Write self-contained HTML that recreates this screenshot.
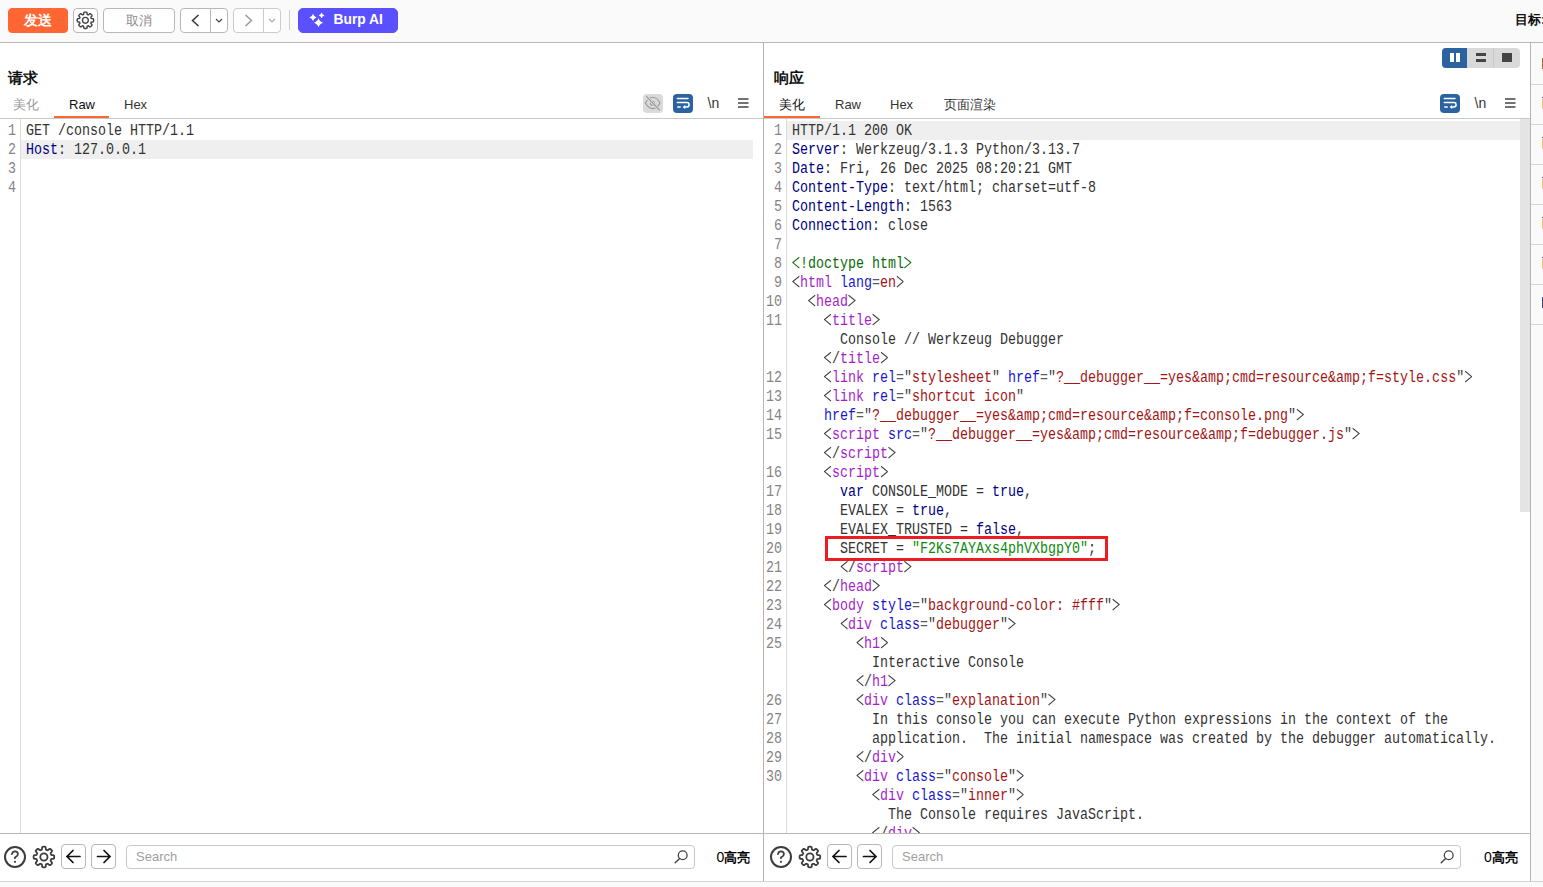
<!DOCTYPE html>
<html><head><meta charset="utf-8"><style>
*{box-sizing:border-box}
html,body{margin:0;padding:0}
body{width:1543px;height:887px;overflow:hidden;position:relative;background:#fff;font-family:"Liberation Sans",sans-serif;color:#111}
.a{position:absolute}
#tb{position:absolute;left:0;top:0;width:1543px;height:42px;background:#fafafa;border-bottom:1px solid #bcb6b6;height:43px}
.btn{position:absolute;top:8px;height:25px;border:1px solid #bdb6b6;border-radius:4px;background:#fff}
.cl{position:absolute;height:19px;line-height:19px;white-space:pre;font-family:"Liberation Mono",monospace;font-size:16px;transform:scaleX(0.8333);transform-origin:0 0;color:#333}
.ln{position:absolute;width:40px;text-align:right;height:19px;line-height:19px;font-family:"Liberation Mono",monospace;font-size:16px;color:#858585;transform:scaleX(0.8333);transform-origin:100% 0}
.t{color:#333}
.k{color:#000080}
.tg{color:#a51fc9}
.at{color:#1717cc}
.av{color:#a31515}
.eq{color:#5a5a5a}
.p{color:#404040}
.dt{color:#0b6b0b}
.str{color:#0d8a0d}
.title{position:absolute;top:69px;font-size:14.5px;font-weight:bold;color:#111}
.tab{position:absolute;top:96px;font-size:13px;line-height:18px;color:#222}
.tabu{position:absolute;top:116px;height:2px;background:#ff6633}
.hsep{position:absolute;height:1px;background:#c8c8c8}
.vsep{position:absolute;width:1px;background:#b9b3b3}
.srch{position:absolute;top:845px;height:24px;border:1px solid #c9c9c9;border-radius:4px;background:#fff}
.srch span{position:absolute;left:9px;top:3px;font-size:13px;line-height:16px;color:#a0a0a0}
.fbtn{position:absolute;top:844px;width:25px;height:25px;border:1px solid #bdb6b6;border-radius:4px;background:#fff}
.hl{position:absolute;font-size:13.5px;line-height:18px;top:847.5px;color:#000;white-space:nowrap}
.br{display:inline-block;width:9.6px;height:19px;vertical-align:top;color:#3a3a3a}
.br svg{display:block}
.dt.br{color:#0b6b0b}

</style></head><body>
<!-- toolbar -->
<div id="tb"></div>
<div class="btn" style="left:8px;width:60px;background:#ff6633;border-color:#ff6633"><span class="a" style="left:0;width:58px;top:3px;text-align:center;font-size:13.5px;line-height:17px;color:#fff;font-weight:600">发送</span></div>
<div class="btn" style="left:73px;width:25px"></div>
<svg class="a" style="left:73px;top:8px" width="25" height="25" viewBox="0 0 25 25"><path id="gearp" d="M20.60 12.30 L20.60 12.51 L20.59 12.73 L20.57 12.94 L20.55 13.16 L20.51 13.37 L20.45 13.57 L20.29 13.76 L19.93 13.90 L19.31 13.96 L18.74 14.00 L18.42 14.08 L18.26 14.20 L18.17 14.34 L18.10 14.49 L18.04 14.63 L17.98 14.78 L17.92 14.94 L17.89 15.10 L17.92 15.30 L18.08 15.58 L18.46 16.01 L18.86 16.49 L19.02 16.85 L18.99 17.09 L18.89 17.28 L18.77 17.46 L18.63 17.62 L18.49 17.79 L18.35 17.94 L18.20 18.10 L18.04 18.25 L17.89 18.39 L17.72 18.53 L17.56 18.67 L17.38 18.79 L17.19 18.89 L16.95 18.92 L16.59 18.76 L16.11 18.36 L15.68 17.98 L15.40 17.82 L15.20 17.79 L15.04 17.82 L14.88 17.88 L14.73 17.94 L14.59 18.00 L14.44 18.07 L14.30 18.16 L14.18 18.32 L14.10 18.64 L14.06 19.21 L14.00 19.83 L13.86 20.19 L13.67 20.35 L13.47 20.41 L13.26 20.45 L13.04 20.47 L12.83 20.49 L12.61 20.50 L12.40 20.50 L12.19 20.50 L11.97 20.49 L11.76 20.47 L11.54 20.45 L11.33 20.41 L11.13 20.35 L10.94 20.19 L10.80 19.83 L10.74 19.21 L10.70 18.64 L10.62 18.32 L10.50 18.16 L10.36 18.07 L10.21 18.00 L10.07 17.94 L9.92 17.88 L9.76 17.82 L9.60 17.79 L9.40 17.82 L9.12 17.98 L8.69 18.36 L8.21 18.76 L7.85 18.92 L7.61 18.89 L7.42 18.79 L7.24 18.67 L7.08 18.53 L6.91 18.39 L6.76 18.25 L6.60 18.10 L6.45 17.94 L6.31 17.79 L6.17 17.62 L6.03 17.46 L5.91 17.28 L5.81 17.09 L5.78 16.85 L5.94 16.49 L6.34 16.01 L6.72 15.58 L6.88 15.30 L6.91 15.10 L6.88 14.94 L6.82 14.78 L6.76 14.63 L6.70 14.49 L6.63 14.34 L6.54 14.20 L6.38 14.08 L6.06 14.00 L5.49 13.96 L4.87 13.90 L4.51 13.76 L4.35 13.57 L4.29 13.37 L4.25 13.16 L4.23 12.94 L4.21 12.73 L4.20 12.51 L4.20 12.30 L4.20 12.09 L4.21 11.87 L4.23 11.66 L4.25 11.44 L4.29 11.23 L4.35 11.03 L4.51 10.84 L4.87 10.70 L5.49 10.64 L6.06 10.60 L6.38 10.52 L6.54 10.40 L6.63 10.26 L6.70 10.11 L6.76 9.97 L6.82 9.82 L6.88 9.66 L6.91 9.50 L6.88 9.30 L6.72 9.02 L6.34 8.59 L5.94 8.11 L5.78 7.75 L5.81 7.51 L5.91 7.32 L6.03 7.14 L6.17 6.98 L6.31 6.81 L6.45 6.66 L6.60 6.50 L6.76 6.35 L6.91 6.21 L7.08 6.07 L7.24 5.93 L7.42 5.81 L7.61 5.71 L7.85 5.68 L8.21 5.84 L8.69 6.24 L9.12 6.62 L9.40 6.78 L9.60 6.81 L9.76 6.78 L9.92 6.72 L10.07 6.66 L10.21 6.60 L10.36 6.53 L10.50 6.44 L10.62 6.28 L10.70 5.96 L10.74 5.39 L10.80 4.77 L10.94 4.41 L11.13 4.25 L11.33 4.19 L11.54 4.15 L11.76 4.13 L11.97 4.11 L12.19 4.10 L12.40 4.10 L12.61 4.10 L12.83 4.11 L13.04 4.13 L13.26 4.15 L13.47 4.19 L13.67 4.25 L13.86 4.41 L14.00 4.77 L14.06 5.39 L14.10 5.96 L14.18 6.28 L14.30 6.44 L14.44 6.53 L14.59 6.60 L14.73 6.66 L14.88 6.72 L15.04 6.78 L15.20 6.81 L15.40 6.78 L15.68 6.62 L16.11 6.24 L16.59 5.84 L16.95 5.68 L17.19 5.71 L17.38 5.81 L17.56 5.93 L17.72 6.07 L17.89 6.21 L18.04 6.35 L18.20 6.50 L18.35 6.66 L18.49 6.81 L18.63 6.98 L18.77 7.14 L18.89 7.32 L18.99 7.51 L19.02 7.75 L18.86 8.11 L18.46 8.59 L18.08 9.02 L17.92 9.30 L17.89 9.50 L17.92 9.66 L17.98 9.82 L18.04 9.97 L18.10 10.11 L18.17 10.26 L18.26 10.40 L18.42 10.52 L18.74 10.60 L19.31 10.64 L19.93 10.70 L20.29 10.84 L20.45 11.03 L20.51 11.23 L20.55 11.44 L20.57 11.66 L20.59 11.87 L20.60 12.09Z" fill="none" stroke="#444" stroke-width="1.45" stroke-linejoin="round"/><circle cx="12.4" cy="12.3" r="2.9" fill="none" stroke="#444" stroke-width="1.35"/></svg>
<div class="btn" style="left:103px;width:72px"><span class="a" style="left:0;width:70px;top:3px;text-align:center;font-size:13px;line-height:17px;color:#8a8a8a">取消</span></div>
<div class="btn" style="left:180px;width:48px"></div>
<div class="a" style="left:210px;top:9px;width:1px;height:23px;background:#bdb6b6"></div>
<svg class="a" style="left:180px;top:8px" width="48" height="25"><path d="M18.5 7 L12.5 12.5 L18.5 18" fill="none" stroke="#333" stroke-width="1.5"/><path d="M36 11 L39 14 L42 11" fill="none" stroke="#444" stroke-width="1.2"/></svg>
<div class="btn" style="left:233px;width:48px;border-color:#cfcaca"></div>
<div class="a" style="left:263px;top:9px;width:1px;height:23px;background:#cfcaca"></div>
<svg class="a" style="left:233px;top:8px" width="48" height="25"><path d="M12.5 7 L18.5 12.5 L12.5 18" fill="none" stroke="#9a9a9a" stroke-width="1.5"/><path d="M36 11 L39 14 L42 11" fill="none" stroke="#aaa" stroke-width="1.2"/></svg>
<div class="a" style="left:289px;top:10px;width:1px;height:20px;background:#cfcfcf"></div>
<div class="btn" style="left:298px;width:100px;background:#5b50ff;border-color:#5b50ff;border-radius:5px"></div>
<svg class="a" style="left:298px;top:8px" width="30" height="25" viewBox="0 0 30 25">
<path fill="#fff" d="M20.5 10.05 Q21.512 13.638 25.1 14.65 Q21.512 15.662 20.5 19.25 Q19.488 15.662 15.9 14.65 Q19.488 13.638 20.5 10.05Z"/>
<path fill="#fff" d="M15 5.7 Q15.814 8.586 18.7 9.4 Q15.814 10.214 15 13.100000000000001 Q14.186 10.214 11.3 9.4 Q14.186 8.586 15 5.7Z"/>
<path fill="#fff" d="M23.6 4.5 Q24.238000000000003 6.7620000000000005 26.5 7.4 Q24.238000000000003 8.038 23.6 10.3 Q22.962 8.038 20.700000000000003 7.4 Q22.962 6.7620000000000005 23.6 4.5Z"/>
</svg>
<span class="a" style="left:333.5px;top:11px;font-size:13.8px;line-height:18px;font-weight:bold;color:#fff">Burp AI</span>
<span class="a" style="left:1515px;top:10.5px;font-size:13px;line-height:18px;font-weight:bold;color:#111;white-space:nowrap">目标: </span>

<!-- frame -->
<div class="vsep" style="left:763px;top:43px;height:839px"></div>
<div class="a" style="left:1531px;top:43px;width:12px;height:844px;background:#fafafa"></div>
<div class="vsep" style="left:1530px;top:43px;height:839px"></div>
<div class="a" style="left:1541.5px;top:58px;width:1.5px;height:11px;background:#a86a3a"></div>
<div class="a" style="left:1541.5px;top:97px;width:1.5px;height:1px;background:#5a4a8a"></div><div class="a" style="left:1541.5px;top:99px;width:1.5px;height:10px;background:#eec68a"></div>
<div class="a" style="left:1541.5px;top:137px;width:1.5px;height:1px;background:#5a4a8a"></div><div class="a" style="left:1541.5px;top:139px;width:1.5px;height:10px;background:#eec68a"></div>
<div class="a" style="left:1541.5px;top:177px;width:1.5px;height:1px;background:#5a4a8a"></div><div class="a" style="left:1541.5px;top:179px;width:1.5px;height:10px;background:#eec68a"></div>
<div class="a" style="left:1541.5px;top:217px;width:1.5px;height:1px;background:#5a4a8a"></div><div class="a" style="left:1541.5px;top:219px;width:1.5px;height:10px;background:#eec68a"></div>
<div class="a" style="left:1541.5px;top:257px;width:1.5px;height:1px;background:#5a4a8a"></div><div class="a" style="left:1541.5px;top:259px;width:1.5px;height:10px;background:#eec68a"></div>
<div class="a" style="left:1541.5px;top:297px;width:1.5px;height:11px;background:#4a4a7a"></div>
<div class="a" style="left:1531px;top:84px;width:12px;height:1px;background:#d4d4d4"></div>
<div class="a" style="left:1531px;top:124px;width:12px;height:1px;background:#d4d4d4"></div>
<div class="a" style="left:1531px;top:164px;width:12px;height:1px;background:#d4d4d4"></div>
<div class="a" style="left:1531px;top:204px;width:12px;height:1px;background:#d4d4d4"></div>
<div class="a" style="left:1531px;top:244px;width:12px;height:1px;background:#d4d4d4"></div>
<div class="a" style="left:1531px;top:284px;width:12px;height:1px;background:#d4d4d4"></div>
<div class="a" style="left:1531px;top:324px;width:12px;height:1px;background:#d4d4d4"></div>

<!-- request -->
<span class="title" style="left:8px">请求</span>
<span class="tab" style="left:13px;color:#9a9a9a">美化</span>
<span class="tab" style="left:69px;color:#111">Raw</span>
<span class="tab" style="left:124px;color:#333">Hex</span>
<div class="tabu" style="left:54px;width:55px"></div>
<div class="hsep" style="left:0;top:118px;width:763px"></div>
<div class="a" style="left:643px;top:94px;width:20px;height:19px;background:#dadada;border-radius:4px"></div>
<svg class="a" style="left:643px;top:94px" width="20" height="19"><path d="M2.4 9 C4.5 5.5 6.5 3.2 9.5 3.2 C13 3.2 15.5 6 17 9 C15.5 12 13 14.6 9.5 14.6 C6.5 14.6 4.5 12.5 2.4 9Z" fill="none" stroke="#9a9a9a" stroke-width="1.15"/><circle cx="9.5" cy="9.3" r="2" fill="none" stroke="#9a9a9a" stroke-width="1.1"/><path d="M3.2 2.2 L16.8 16.4" stroke="#dadada" stroke-width="2.8"/><path d="M3.2 2.2 L16.8 16.4" stroke="#999" stroke-width="1.15"/></svg>
<div class="a" style="left:673px;top:94px;width:20px;height:19px;background:#2a63a0;border-radius:4px"></div><svg class="a" style="left:673px;top:94px" width="20" height="19"><path d="M4.3 4.5h10.7" stroke="#fff" stroke-width="1.5" stroke-linecap="round"/><path d="M4.3 8.6h9.6a2.2 2.2 0 0 1 0 4.4h-2.4" fill="none" stroke="#fff" stroke-width="1.5" stroke-linecap="round"/><path d="M9.6 13 L12.2 10.9 L12.2 15.1Z" fill="#fff"/><path d="M4.3 13h3.4" stroke="#fff" stroke-width="1.5"/></svg>
<span class="a" style="left:707.5px;top:94px;font-size:14px;line-height:18px;color:#333">\n</span>
<svg class="a" style="left:737px;top:97px" width="12" height="12"><path d="M1 2h10.5M1 6h10.5M1 10h10.5" stroke="#444" stroke-width="1.5"/></svg>
<div class="a" style="left:20px;top:119px;width:1px;height:714px;background:#dcdcdc"></div>
<div class="a" style="left:21px;top:140px;width:732px;height:19px;background:#efefef"></div>
<div class="ln" style="top:122px;left:-24px">1</div>
<div class="cl" style="top:122px;left:26px"><span class="t">GET /console HTTP/1.1</span></div>
<div class="ln" style="top:141px;left:-24px">2</div>
<div class="cl" style="top:141px;left:26px"><span class="k">Host</span><span class="t">: 127.0.0.1</span></div>
<div class="ln" style="top:160px;left:-24px">3</div>
<div class="cl" style="top:160px;left:26px"></div>
<div class="ln" style="top:179px;left:-24px">4</div>
<div class="cl" style="top:179px;left:26px"></div>

<!-- response -->
<span class="title" style="left:774px">响应</span>
<span class="tab" style="left:779px;color:#111">美化</span>
<span class="tab" style="left:835px;color:#333">Raw</span>
<span class="tab" style="left:890px;color:#333">Hex</span>
<span class="tab" style="left:944px;color:#333">页面渲染</span>
<div class="tabu" style="left:764px;width:56px"></div>
<div class="hsep" style="left:764px;top:118px;width:766px"></div>
<div class="a" style="left:1442px;top:48px;width:78px;height:20px;background:#d9d9d9;border-radius:4px"></div>
<div class="a" style="left:1442px;top:48px;width:25px;height:20px;background:#2a63a0;border-radius:4px 0 0 4px"></div>
<div class="a" style="left:1493px;top:48px;width:1px;height:20px;background:#c8c8c8"></div>
<div class="a" style="left:1450px;top:53px;width:4px;height:9px;background:#fff"></div>
<div class="a" style="left:1456px;top:53px;width:4px;height:9px;background:#fff"></div>
<div class="a" style="left:1476px;top:53px;width:10px;height:3px;background:#444"></div>
<div class="a" style="left:1476px;top:59px;width:10px;height:3px;background:#444"></div>
<div class="a" style="left:1502px;top:53px;width:10px;height:9px;background:#444"></div>
<div class="a" style="left:1440px;top:94px;width:20px;height:19px;background:#2a63a0;border-radius:4px"></div><svg class="a" style="left:1440px;top:94px" width="20" height="19"><path d="M4.3 4.5h10.7" stroke="#fff" stroke-width="1.5" stroke-linecap="round"/><path d="M4.3 8.6h9.6a2.2 2.2 0 0 1 0 4.4h-2.4" fill="none" stroke="#fff" stroke-width="1.5" stroke-linecap="round"/><path d="M9.6 13 L12.2 10.9 L12.2 15.1Z" fill="#fff"/><path d="M4.3 13h3.4" stroke="#fff" stroke-width="1.5"/></svg>
<span class="a" style="left:1474.5px;top:94px;font-size:14px;line-height:18px;color:#333">\n</span>
<svg class="a" style="left:1504px;top:97px" width="12" height="12"><path d="M1 2h10.5M1 6h10.5M1 10h10.5" stroke="#444" stroke-width="1.5"/></svg>
<div class="a" style="left:786px;top:119px;width:1px;height:714px;background:#dcdcdc"></div>
<div class="a" style="left:787px;top:121px;width:733px;height:19px;background:#efefef"></div>
<div class="a" style="left:1520px;top:119px;width:10px;height:393px;background:#e4e4e4"></div>
<div class="ln" style="top:122px;left:742px">1</div>
<div class="cl" style="top:122px;left:792px"><span class="t">HTTP/1.1 200 OK</span></div>
<div class="ln" style="top:141px;left:742px">2</div>
<div class="cl" style="top:141px;left:792px"><span class="k">Server</span><span class="t">: Werkzeug/3.1.3 Python/3.13.7</span></div>
<div class="ln" style="top:160px;left:742px">3</div>
<div class="cl" style="top:160px;left:792px"><span class="k">Date</span><span class="t">: Fri, 26 Dec 2025 08:20:21 GMT</span></div>
<div class="ln" style="top:179px;left:742px">4</div>
<div class="cl" style="top:179px;left:792px"><span class="k">Content-Type</span><span class="t">: text/html; charset=utf-8</span></div>
<div class="ln" style="top:198px;left:742px">5</div>
<div class="cl" style="top:198px;left:792px"><span class="k">Content-Length</span><span class="t">: 1563</span></div>
<div class="ln" style="top:217px;left:742px">6</div>
<div class="cl" style="top:217px;left:792px"><span class="k">Connection</span><span class="t">: close</span></div>
<div class="ln" style="top:236px;left:742px">7</div>
<div class="cl" style="top:236px;left:792px"></div>
<div class="ln" style="top:255px;left:742px">8</div>
<div class="cl" style="top:255px;left:792px"><span class="dt br"><svg width="9.6" height="19"><path d="M8.8 2.2L1 7.6L8.8 13" fill="none" stroke="currentColor" stroke-width="1.15"/></svg></span><span class="dt">!doctype html</span><span class="dt br"><svg width="9.6" height="19"><path d="M0.8 2.2L8.6 7.6L0.8 13" fill="none" stroke="currentColor" stroke-width="1.15"/></svg></span></div>
<div class="ln" style="top:274px;left:742px">9</div>
<div class="cl" style="top:274px;left:792px"><span class="br"><svg width="9.6" height="19"><path d="M8.8 2.2L1 7.6L8.8 13" fill="none" stroke="currentColor" stroke-width="1.15"/></svg></span><span class="tg">html</span><span class="t"> </span><span class="at">lang</span><span class="eq">=</span><span class="av">en</span><span class="br"><svg width="9.6" height="19"><path d="M0.8 2.2L8.6 7.6L0.8 13" fill="none" stroke="currentColor" stroke-width="1.15"/></svg></span></div>
<div class="ln" style="top:293px;left:742px">10</div>
<div class="cl" style="top:293px;left:792px">  <span class="br"><svg width="9.6" height="19"><path d="M8.8 2.2L1 7.6L8.8 13" fill="none" stroke="currentColor" stroke-width="1.15"/></svg></span><span class="tg">head</span><span class="br"><svg width="9.6" height="19"><path d="M0.8 2.2L8.6 7.6L0.8 13" fill="none" stroke="currentColor" stroke-width="1.15"/></svg></span></div>
<div class="ln" style="top:312px;left:742px">11</div>
<div class="cl" style="top:312px;left:792px">    <span class="br"><svg width="9.6" height="19"><path d="M8.8 2.2L1 7.6L8.8 13" fill="none" stroke="currentColor" stroke-width="1.15"/></svg></span><span class="tg">title</span><span class="br"><svg width="9.6" height="19"><path d="M0.8 2.2L8.6 7.6L0.8 13" fill="none" stroke="currentColor" stroke-width="1.15"/></svg></span></div>
<div class="cl" style="top:331px;left:792px">      <span class="t">Console // Werkzeug Debugger</span></div>
<div class="cl" style="top:350px;left:792px">    <span class="br"><svg width="9.6" height="19"><path d="M8.8 2.2L1 7.6L8.8 13" fill="none" stroke="currentColor" stroke-width="1.15"/></svg></span><span class="p">/</span><span class="tg">title</span><span class="br"><svg width="9.6" height="19"><path d="M0.8 2.2L8.6 7.6L0.8 13" fill="none" stroke="currentColor" stroke-width="1.15"/></svg></span></div>
<div class="ln" style="top:369px;left:742px">12</div>
<div class="cl" style="top:369px;left:792px">    <span class="br"><svg width="9.6" height="19"><path d="M8.8 2.2L1 7.6L8.8 13" fill="none" stroke="currentColor" stroke-width="1.15"/></svg></span><span class="tg">link</span><span class="t"> </span><span class="at">rel</span><span class="eq">=</span><span class="p">"</span><span class="av">stylesheet</span><span class="p">"</span><span class="t"> </span><span class="at">href</span><span class="eq">=</span><span class="p">"</span><span class="av">?__debugger__=yes&amp;amp;cmd=resource&amp;amp;f=style.css</span><span class="p">"</span><span class="br"><svg width="9.6" height="19"><path d="M0.8 2.2L8.6 7.6L0.8 13" fill="none" stroke="currentColor" stroke-width="1.15"/></svg></span></div>
<div class="ln" style="top:388px;left:742px">13</div>
<div class="cl" style="top:388px;left:792px">    <span class="br"><svg width="9.6" height="19"><path d="M8.8 2.2L1 7.6L8.8 13" fill="none" stroke="currentColor" stroke-width="1.15"/></svg></span><span class="tg">link</span><span class="t"> </span><span class="at">rel</span><span class="eq">=</span><span class="p">"</span><span class="av">shortcut icon</span><span class="p">"</span></div>
<div class="ln" style="top:407px;left:742px">14</div>
<div class="cl" style="top:407px;left:792px">    <span class="at">href</span><span class="eq">=</span><span class="p">"</span><span class="av">?__debugger__=yes&amp;amp;cmd=resource&amp;amp;f=console.png</span><span class="p">"</span><span class="br"><svg width="9.6" height="19"><path d="M0.8 2.2L8.6 7.6L0.8 13" fill="none" stroke="currentColor" stroke-width="1.15"/></svg></span></div>
<div class="ln" style="top:426px;left:742px">15</div>
<div class="cl" style="top:426px;left:792px">    <span class="br"><svg width="9.6" height="19"><path d="M8.8 2.2L1 7.6L8.8 13" fill="none" stroke="currentColor" stroke-width="1.15"/></svg></span><span class="tg">script</span><span class="t"> </span><span class="at">src</span><span class="eq">=</span><span class="p">"</span><span class="av">?__debugger__=yes&amp;amp;cmd=resource&amp;amp;f=debugger.js</span><span class="p">"</span><span class="br"><svg width="9.6" height="19"><path d="M0.8 2.2L8.6 7.6L0.8 13" fill="none" stroke="currentColor" stroke-width="1.15"/></svg></span></div>
<div class="cl" style="top:445px;left:792px">    <span class="br"><svg width="9.6" height="19"><path d="M8.8 2.2L1 7.6L8.8 13" fill="none" stroke="currentColor" stroke-width="1.15"/></svg></span><span class="p">/</span><span class="tg">script</span><span class="br"><svg width="9.6" height="19"><path d="M0.8 2.2L8.6 7.6L0.8 13" fill="none" stroke="currentColor" stroke-width="1.15"/></svg></span></div>
<div class="ln" style="top:464px;left:742px">16</div>
<div class="cl" style="top:464px;left:792px">    <span class="br"><svg width="9.6" height="19"><path d="M8.8 2.2L1 7.6L8.8 13" fill="none" stroke="currentColor" stroke-width="1.15"/></svg></span><span class="tg">script</span><span class="br"><svg width="9.6" height="19"><path d="M0.8 2.2L8.6 7.6L0.8 13" fill="none" stroke="currentColor" stroke-width="1.15"/></svg></span></div>
<div class="ln" style="top:483px;left:742px">17</div>
<div class="cl" style="top:483px;left:792px">      <span class="k">var</span><span class="t"> CONSOLE_MODE = </span><span class="k">true</span><span class="t">,</span></div>
<div class="ln" style="top:502px;left:742px">18</div>
<div class="cl" style="top:502px;left:792px">      <span class="t">EVALEX = </span><span class="k">true</span><span class="t">,</span></div>
<div class="ln" style="top:521px;left:742px">19</div>
<div class="cl" style="top:521px;left:792px">      <span class="t">EVALEX_TRUSTED = </span><span class="k">false</span><span class="t">,</span></div>
<div class="ln" style="top:540px;left:742px">20</div>
<div class="cl" style="top:540px;left:792px">      <span class="t">SECRET = </span><span class="str">"F2Ks7AYAxs4phVXbgpY0"</span><span class="t">;</span></div>
<div class="ln" style="top:559px;left:742px">21</div>
<div class="cl" style="top:559px;left:792px">      <span class="br"><svg width="9.6" height="19"><path d="M8.8 2.2L1 7.6L8.8 13" fill="none" stroke="currentColor" stroke-width="1.15"/></svg></span><span class="p">/</span><span class="tg">script</span><span class="br"><svg width="9.6" height="19"><path d="M0.8 2.2L8.6 7.6L0.8 13" fill="none" stroke="currentColor" stroke-width="1.15"/></svg></span></div>
<div class="ln" style="top:578px;left:742px">22</div>
<div class="cl" style="top:578px;left:792px">    <span class="br"><svg width="9.6" height="19"><path d="M8.8 2.2L1 7.6L8.8 13" fill="none" stroke="currentColor" stroke-width="1.15"/></svg></span><span class="p">/</span><span class="tg">head</span><span class="br"><svg width="9.6" height="19"><path d="M0.8 2.2L8.6 7.6L0.8 13" fill="none" stroke="currentColor" stroke-width="1.15"/></svg></span></div>
<div class="ln" style="top:597px;left:742px">23</div>
<div class="cl" style="top:597px;left:792px">    <span class="br"><svg width="9.6" height="19"><path d="M8.8 2.2L1 7.6L8.8 13" fill="none" stroke="currentColor" stroke-width="1.15"/></svg></span><span class="tg">body</span><span class="t"> </span><span class="at">style</span><span class="eq">=</span><span class="p">"</span><span class="av">background-color: #fff</span><span class="p">"</span><span class="br"><svg width="9.6" height="19"><path d="M0.8 2.2L8.6 7.6L0.8 13" fill="none" stroke="currentColor" stroke-width="1.15"/></svg></span></div>
<div class="ln" style="top:616px;left:742px">24</div>
<div class="cl" style="top:616px;left:792px">      <span class="br"><svg width="9.6" height="19"><path d="M8.8 2.2L1 7.6L8.8 13" fill="none" stroke="currentColor" stroke-width="1.15"/></svg></span><span class="tg">div</span><span class="t"> </span><span class="at">class</span><span class="eq">=</span><span class="p">"</span><span class="av">debugger</span><span class="p">"</span><span class="br"><svg width="9.6" height="19"><path d="M0.8 2.2L8.6 7.6L0.8 13" fill="none" stroke="currentColor" stroke-width="1.15"/></svg></span></div>
<div class="ln" style="top:635px;left:742px">25</div>
<div class="cl" style="top:635px;left:792px">        <span class="br"><svg width="9.6" height="19"><path d="M8.8 2.2L1 7.6L8.8 13" fill="none" stroke="currentColor" stroke-width="1.15"/></svg></span><span class="tg">h1</span><span class="br"><svg width="9.6" height="19"><path d="M0.8 2.2L8.6 7.6L0.8 13" fill="none" stroke="currentColor" stroke-width="1.15"/></svg></span></div>
<div class="cl" style="top:654px;left:792px">          <span class="t">Interactive Console</span></div>
<div class="cl" style="top:673px;left:792px">        <span class="br"><svg width="9.6" height="19"><path d="M8.8 2.2L1 7.6L8.8 13" fill="none" stroke="currentColor" stroke-width="1.15"/></svg></span><span class="p">/</span><span class="tg">h1</span><span class="br"><svg width="9.6" height="19"><path d="M0.8 2.2L8.6 7.6L0.8 13" fill="none" stroke="currentColor" stroke-width="1.15"/></svg></span></div>
<div class="ln" style="top:692px;left:742px">26</div>
<div class="cl" style="top:692px;left:792px">        <span class="br"><svg width="9.6" height="19"><path d="M8.8 2.2L1 7.6L8.8 13" fill="none" stroke="currentColor" stroke-width="1.15"/></svg></span><span class="tg">div</span><span class="t"> </span><span class="at">class</span><span class="eq">=</span><span class="p">"</span><span class="av">explanation</span><span class="p">"</span><span class="br"><svg width="9.6" height="19"><path d="M0.8 2.2L8.6 7.6L0.8 13" fill="none" stroke="currentColor" stroke-width="1.15"/></svg></span></div>
<div class="ln" style="top:711px;left:742px">27</div>
<div class="cl" style="top:711px;left:792px">          <span class="t">In this console you can execute Python expressions in the context of the</span></div>
<div class="ln" style="top:730px;left:742px">28</div>
<div class="cl" style="top:730px;left:792px">          <span class="t">application.  The initial namespace was created by the debugger automatically.</span></div>
<div class="ln" style="top:749px;left:742px">29</div>
<div class="cl" style="top:749px;left:792px">        <span class="br"><svg width="9.6" height="19"><path d="M8.8 2.2L1 7.6L8.8 13" fill="none" stroke="currentColor" stroke-width="1.15"/></svg></span><span class="p">/</span><span class="tg">div</span><span class="br"><svg width="9.6" height="19"><path d="M0.8 2.2L8.6 7.6L0.8 13" fill="none" stroke="currentColor" stroke-width="1.15"/></svg></span></div>
<div class="ln" style="top:768px;left:742px">30</div>
<div class="cl" style="top:768px;left:792px">        <span class="br"><svg width="9.6" height="19"><path d="M8.8 2.2L1 7.6L8.8 13" fill="none" stroke="currentColor" stroke-width="1.15"/></svg></span><span class="tg">div</span><span class="t"> </span><span class="at">class</span><span class="eq">=</span><span class="p">"</span><span class="av">console</span><span class="p">"</span><span class="br"><svg width="9.6" height="19"><path d="M0.8 2.2L8.6 7.6L0.8 13" fill="none" stroke="currentColor" stroke-width="1.15"/></svg></span></div>
<div class="cl" style="top:787px;left:792px">          <span class="br"><svg width="9.6" height="19"><path d="M8.8 2.2L1 7.6L8.8 13" fill="none" stroke="currentColor" stroke-width="1.15"/></svg></span><span class="tg">div</span><span class="t"> </span><span class="at">class</span><span class="eq">=</span><span class="p">"</span><span class="av">inner</span><span class="p">"</span><span class="br"><svg width="9.6" height="19"><path d="M0.8 2.2L8.6 7.6L0.8 13" fill="none" stroke="currentColor" stroke-width="1.15"/></svg></span></div>
<div class="cl" style="top:806px;left:792px">            <span class="t">The Console requires JavaScript.</span></div>
<div class="cl" style="top:825px;left:792px">          <span class="br"><svg width="9.6" height="19"><path d="M8.8 2.2L1 7.6L8.8 13" fill="none" stroke="currentColor" stroke-width="1.15"/></svg></span><span class="p">/</span><span class="tg">div</span><span class="br"><svg width="9.6" height="19"><path d="M0.8 2.2L8.6 7.6L0.8 13" fill="none" stroke="currentColor" stroke-width="1.15"/></svg></span></div>
<div class="a" style="left:825px;top:536px;width:283px;height:25px;border:3px solid #ec1c24"></div>
<div class="a" style="left:764px;top:819px;width:756px;height:14px;background:transparent"></div>

<!-- footer -->
<div class="a" style="left:0;top:833px;width:1530px;height:48px;background:#fff"></div>
<div class="a" style="left:0;top:833px;width:1530px;height:1px;background:#bdb6b6"></div>
<div class="a" style="left:0;top:881px;width:1543px;height:1px;background:#d3d3d3"></div>
<div class="a" style="left:0;top:882px;width:1543px;height:5px;background:#fafafa"></div>
<div class="vsep" style="left:763px;top:833px;height:48px"></div>
<div class="vsep" style="left:1530px;top:833px;height:48px"></div>
<svg class="a" style="left:0;top:833px" width="1543" height="48" viewBox="0 833 1543 48"><circle cx="15" cy="857" r="10" fill="none" stroke="#3d3d3d" stroke-width="2"/><path d="M11.9 854.1 Q12.5 851.4 15 851.4 Q17.9 851.4 17.9 854.1 Q17.9 856.1 14.9 857.5 L14.9 858.3" fill="none" stroke="#3d3d3d" stroke-width="1.7" stroke-linecap="round"/><circle cx="15" cy="861.8" r="1.1" fill="#3d3d3d"/><path d="M54.20 857.00 L54.20 857.27 L54.18 857.54 L54.16 857.81 L54.12 858.07 L54.04 858.34 L53.86 858.58 L53.43 858.77 L52.63 858.86 L51.86 858.91 L51.45 859.02 L51.26 859.18 L51.15 859.36 L51.07 859.54 L51.00 859.72 L50.92 859.91 L50.84 860.09 L50.77 860.28 L50.69 860.46 L50.64 860.66 L50.67 860.91 L50.88 861.28 L51.39 861.86 L51.88 862.49 L52.06 862.93 L52.02 863.23 L51.89 863.47 L51.73 863.68 L51.55 863.89 L51.37 864.09 L51.18 864.28 L50.99 864.47 L50.79 864.65 L50.58 864.83 L50.37 864.99 L50.13 865.12 L49.83 865.16 L49.39 864.98 L48.76 864.49 L48.18 863.98 L47.81 863.77 L47.56 863.74 L47.36 863.79 L47.18 863.87 L46.99 863.94 L46.81 864.02 L46.62 864.10 L46.44 864.17 L46.26 864.25 L46.08 864.36 L45.92 864.55 L45.81 864.96 L45.76 865.73 L45.67 866.53 L45.48 866.96 L45.24 867.14 L44.97 867.22 L44.71 867.26 L44.44 867.28 L44.17 867.30 L43.90 867.30 L43.63 867.30 L43.36 867.28 L43.09 867.26 L42.83 867.22 L42.56 867.14 L42.32 866.96 L42.13 866.53 L42.04 865.73 L41.99 864.96 L41.88 864.55 L41.72 864.36 L41.54 864.25 L41.36 864.17 L41.18 864.10 L40.99 864.02 L40.81 863.94 L40.62 863.87 L40.44 863.79 L40.24 863.74 L39.99 863.77 L39.62 863.98 L39.04 864.49 L38.41 864.98 L37.97 865.16 L37.67 865.12 L37.43 864.99 L37.22 864.83 L37.01 864.65 L36.81 864.47 L36.62 864.28 L36.43 864.09 L36.25 863.89 L36.07 863.68 L35.91 863.47 L35.78 863.23 L35.74 862.93 L35.92 862.49 L36.41 861.86 L36.92 861.28 L37.13 860.91 L37.16 860.66 L37.11 860.46 L37.03 860.28 L36.96 860.09 L36.88 859.91 L36.80 859.72 L36.73 859.54 L36.65 859.36 L36.54 859.18 L36.35 859.02 L35.94 858.91 L35.17 858.86 L34.37 858.77 L33.94 858.58 L33.76 858.34 L33.68 858.07 L33.64 857.81 L33.62 857.54 L33.60 857.27 L33.60 857.00 L33.60 856.73 L33.62 856.46 L33.64 856.19 L33.68 855.93 L33.76 855.66 L33.94 855.42 L34.37 855.23 L35.17 855.14 L35.94 855.09 L36.35 854.98 L36.54 854.82 L36.65 854.64 L36.73 854.46 L36.80 854.28 L36.88 854.09 L36.96 853.91 L37.03 853.72 L37.11 853.54 L37.16 853.34 L37.13 853.09 L36.92 852.72 L36.41 852.14 L35.92 851.51 L35.74 851.07 L35.78 850.77 L35.91 850.53 L36.07 850.32 L36.25 850.11 L36.43 849.91 L36.62 849.72 L36.81 849.53 L37.01 849.35 L37.22 849.17 L37.43 849.01 L37.67 848.88 L37.97 848.84 L38.41 849.02 L39.04 849.51 L39.62 850.02 L39.99 850.23 L40.24 850.26 L40.44 850.21 L40.62 850.13 L40.81 850.06 L40.99 849.98 L41.18 849.90 L41.36 849.83 L41.54 849.75 L41.72 849.64 L41.88 849.45 L41.99 849.04 L42.04 848.27 L42.13 847.47 L42.32 847.04 L42.56 846.86 L42.83 846.78 L43.09 846.74 L43.36 846.72 L43.63 846.70 L43.90 846.70 L44.17 846.70 L44.44 846.72 L44.71 846.74 L44.97 846.78 L45.24 846.86 L45.48 847.04 L45.67 847.47 L45.76 848.27 L45.81 849.04 L45.92 849.45 L46.08 849.64 L46.26 849.75 L46.44 849.83 L46.62 849.90 L46.81 849.98 L46.99 850.06 L47.18 850.13 L47.36 850.21 L47.56 850.26 L47.81 850.23 L48.18 850.02 L48.76 849.51 L49.39 849.02 L49.83 848.84 L50.13 848.88 L50.37 849.01 L50.58 849.17 L50.79 849.35 L50.99 849.53 L51.18 849.72 L51.37 849.91 L51.55 850.11 L51.73 850.32 L51.89 850.53 L52.02 850.77 L52.06 851.07 L51.88 851.51 L51.39 852.14 L50.88 852.72 L50.67 853.09 L50.64 853.34 L50.69 853.54 L50.77 853.72 L50.84 853.91 L50.92 854.09 L51.00 854.28 L51.07 854.46 L51.15 854.64 L51.26 854.82 L51.45 854.98 L51.86 855.09 L52.63 855.14 L53.43 855.23 L53.86 855.42 L54.04 855.66 L54.12 855.93 L54.16 856.19 L54.18 856.46 L54.20 856.73Z" fill="none" stroke="#3d3d3d" stroke-width="1.8" stroke-linejoin="round"/><circle cx="43.9" cy="857" r="3.6" fill="none" stroke="#3d3d3d" stroke-width="1.8"/></svg>
<div class="fbtn" style="left:61px"></div><div class="fbtn" style="left:91px"></div>
<svg class="a" style="left:61px;top:844px" width="55" height="25"><path d="M6.5 12.5h12.5M12 6.5L6 12.5L12 18.5" fill="none" stroke="#111" stroke-width="1.7" stroke-linecap="round"/><path d="M36.5 12.5h12.5M43 6.5L49 12.5L43 18.5" fill="none" stroke="#111" stroke-width="1.7" stroke-linecap="round"/></svg>
<div class="srch" style="left:126px;width:569px"><span>Search</span><svg class="a" style="left:547px;top:3px" width="16" height="16"><circle cx="8.7" cy="6.3" r="4.4" fill="none" stroke="#444" stroke-width="1.3"/><path d="M5.6 9.4L1.2 13.8" stroke="#444" stroke-width="1.4" stroke-linecap="round"/></svg></div>
<span class="hl" style="left:716.5px"><span style="font-size:14px">0</span><span style="font-size:13px;font-weight:600">高亮</span></span>
<svg class="a" style="left:0;top:833px" width="1543" height="48" viewBox="0 833 1543 48"><circle cx="781" cy="857" r="10" fill="none" stroke="#3d3d3d" stroke-width="2"/><path d="M777.9 854.1 Q778.5 851.4 781 851.4 Q783.9 851.4 783.9 854.1 Q783.9 856.1 780.9 857.5 L780.9 858.3" fill="none" stroke="#3d3d3d" stroke-width="1.7" stroke-linecap="round"/><circle cx="781" cy="861.8" r="1.1" fill="#3d3d3d"/><path d="M820.20 857.00 L820.20 857.27 L820.18 857.54 L820.16 857.81 L820.12 858.07 L820.04 858.34 L819.86 858.58 L819.43 858.77 L818.63 858.86 L817.86 858.91 L817.45 859.02 L817.26 859.18 L817.15 859.36 L817.07 859.54 L817.00 859.72 L816.92 859.91 L816.84 860.09 L816.77 860.28 L816.69 860.46 L816.64 860.66 L816.67 860.91 L816.88 861.28 L817.39 861.86 L817.88 862.49 L818.06 862.93 L818.02 863.23 L817.89 863.47 L817.73 863.68 L817.55 863.89 L817.37 864.09 L817.18 864.28 L816.99 864.47 L816.79 864.65 L816.58 864.83 L816.37 864.99 L816.13 865.12 L815.83 865.16 L815.39 864.98 L814.76 864.49 L814.18 863.98 L813.81 863.77 L813.56 863.74 L813.36 863.79 L813.18 863.87 L812.99 863.94 L812.81 864.02 L812.62 864.10 L812.44 864.17 L812.26 864.25 L812.08 864.36 L811.92 864.55 L811.81 864.96 L811.76 865.73 L811.67 866.53 L811.48 866.96 L811.24 867.14 L810.97 867.22 L810.71 867.26 L810.44 867.28 L810.17 867.30 L809.90 867.30 L809.63 867.30 L809.36 867.28 L809.09 867.26 L808.83 867.22 L808.56 867.14 L808.32 866.96 L808.13 866.53 L808.04 865.73 L807.99 864.96 L807.88 864.55 L807.72 864.36 L807.54 864.25 L807.36 864.17 L807.18 864.10 L806.99 864.02 L806.81 863.94 L806.62 863.87 L806.44 863.79 L806.24 863.74 L805.99 863.77 L805.62 863.98 L805.04 864.49 L804.41 864.98 L803.97 865.16 L803.67 865.12 L803.43 864.99 L803.22 864.83 L803.01 864.65 L802.81 864.47 L802.62 864.28 L802.43 864.09 L802.25 863.89 L802.07 863.68 L801.91 863.47 L801.78 863.23 L801.74 862.93 L801.92 862.49 L802.41 861.86 L802.92 861.28 L803.13 860.91 L803.16 860.66 L803.11 860.46 L803.03 860.28 L802.96 860.09 L802.88 859.91 L802.80 859.72 L802.73 859.54 L802.65 859.36 L802.54 859.18 L802.35 859.02 L801.94 858.91 L801.17 858.86 L800.37 858.77 L799.94 858.58 L799.76 858.34 L799.68 858.07 L799.64 857.81 L799.62 857.54 L799.60 857.27 L799.60 857.00 L799.60 856.73 L799.62 856.46 L799.64 856.19 L799.68 855.93 L799.76 855.66 L799.94 855.42 L800.37 855.23 L801.17 855.14 L801.94 855.09 L802.35 854.98 L802.54 854.82 L802.65 854.64 L802.73 854.46 L802.80 854.28 L802.88 854.09 L802.96 853.91 L803.03 853.72 L803.11 853.54 L803.16 853.34 L803.13 853.09 L802.92 852.72 L802.41 852.14 L801.92 851.51 L801.74 851.07 L801.78 850.77 L801.91 850.53 L802.07 850.32 L802.25 850.11 L802.43 849.91 L802.62 849.72 L802.81 849.53 L803.01 849.35 L803.22 849.17 L803.43 849.01 L803.67 848.88 L803.97 848.84 L804.41 849.02 L805.04 849.51 L805.62 850.02 L805.99 850.23 L806.24 850.26 L806.44 850.21 L806.62 850.13 L806.81 850.06 L806.99 849.98 L807.18 849.90 L807.36 849.83 L807.54 849.75 L807.72 849.64 L807.88 849.45 L807.99 849.04 L808.04 848.27 L808.13 847.47 L808.32 847.04 L808.56 846.86 L808.83 846.78 L809.09 846.74 L809.36 846.72 L809.63 846.70 L809.90 846.70 L810.17 846.70 L810.44 846.72 L810.71 846.74 L810.97 846.78 L811.24 846.86 L811.48 847.04 L811.67 847.47 L811.76 848.27 L811.81 849.04 L811.92 849.45 L812.08 849.64 L812.26 849.75 L812.44 849.83 L812.62 849.90 L812.81 849.98 L812.99 850.06 L813.18 850.13 L813.36 850.21 L813.56 850.26 L813.81 850.23 L814.18 850.02 L814.76 849.51 L815.39 849.02 L815.83 848.84 L816.13 848.88 L816.37 849.01 L816.58 849.17 L816.79 849.35 L816.99 849.53 L817.18 849.72 L817.37 849.91 L817.55 850.11 L817.73 850.32 L817.89 850.53 L818.02 850.77 L818.06 851.07 L817.88 851.51 L817.39 852.14 L816.88 852.72 L816.67 853.09 L816.64 853.34 L816.69 853.54 L816.77 853.72 L816.84 853.91 L816.92 854.09 L817.00 854.28 L817.07 854.46 L817.15 854.64 L817.26 854.82 L817.45 854.98 L817.86 855.09 L818.63 855.14 L819.43 855.23 L819.86 855.42 L820.04 855.66 L820.12 855.93 L820.16 856.19 L820.18 856.46 L820.20 856.73Z" fill="none" stroke="#3d3d3d" stroke-width="1.8" stroke-linejoin="round"/><circle cx="809.9" cy="857" r="3.6" fill="none" stroke="#3d3d3d" stroke-width="1.8"/></svg>
<div class="fbtn" style="left:827px"></div><div class="fbtn" style="left:857px"></div>
<svg class="a" style="left:827px;top:844px" width="55" height="25"><path d="M6.5 12.5h12.5M12 6.5L6 12.5L12 18.5" fill="none" stroke="#111" stroke-width="1.7" stroke-linecap="round"/><path d="M36.5 12.5h12.5M43 6.5L49 12.5L43 18.5" fill="none" stroke="#111" stroke-width="1.7" stroke-linecap="round"/></svg>
<div class="srch" style="left:892px;width:569px"><span>Search</span><svg class="a" style="left:547px;top:3px" width="16" height="16"><circle cx="8.7" cy="6.3" r="4.4" fill="none" stroke="#444" stroke-width="1.3"/><path d="M5.6 9.4L1.2 13.8" stroke="#444" stroke-width="1.4" stroke-linecap="round"/></svg></div>
<span class="hl" style="left:1484.0px"><span style="font-size:14px">0</span><span style="font-size:13px;font-weight:600">高亮</span></span>

</body></html>
